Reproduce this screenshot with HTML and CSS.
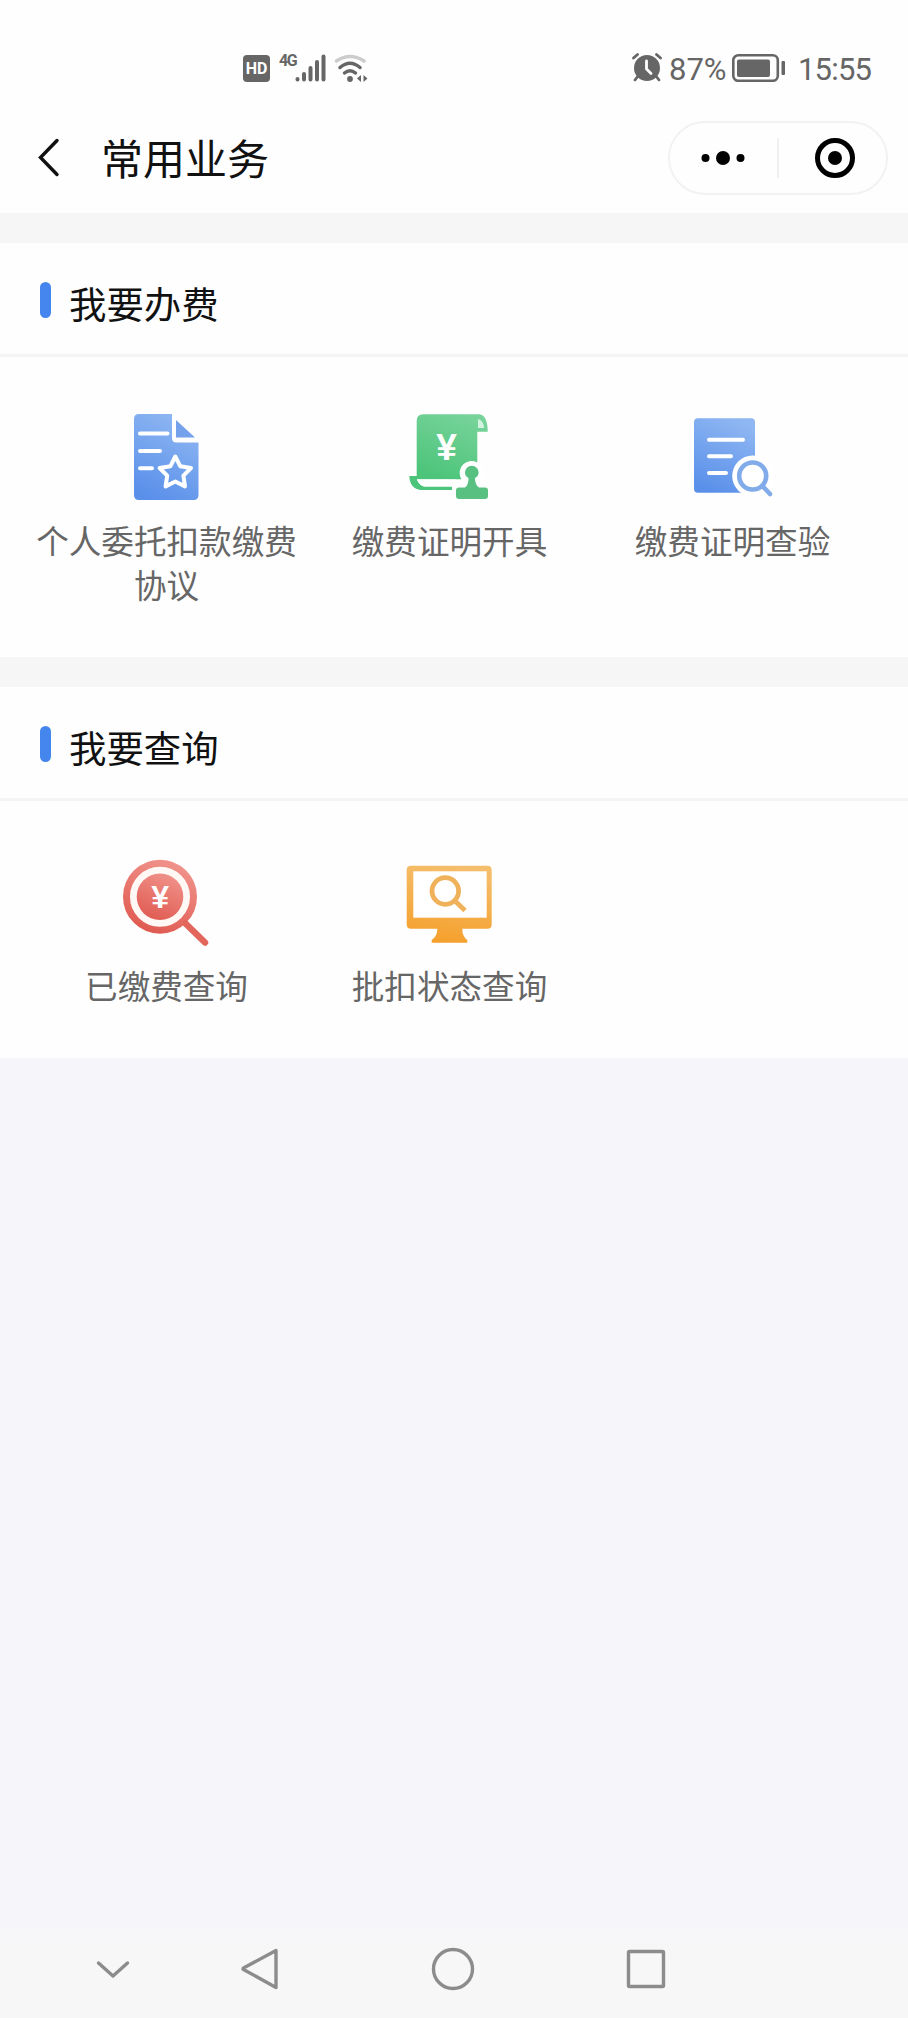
FILE: index.html
```html
<!DOCTYPE html>
<html lang="zh-CN">
<head>
    <meta charset="UTF-8">
    <meta name="viewport" content="width=device-width, initial-scale=1.0">
    <title>常用业务</title>
    <link rel="stylesheet" href="styles.css">
</head>
<body>
    <div class="status-bar">
        <div class="status-left">
            <span class="hd">HD</span>
            <span class="network">4G</span>
            <svg class="signal" width="31" height="28" viewBox="0 0 31 28">
                <g stroke="#666" stroke-width="4" stroke-linecap="round">
                    <path d="M2.500 25v0.500M9 20v5.500M15.500 14v11.500M22 8v17.500M28.500 2.500v23"/>
                </g>
            </svg>
            <svg class="wifi" width="34" height="28" viewBox="0 0 34 28">
                <g fill="none" stroke-width="3.500" stroke-linecap="round">
                    <path stroke="#ccc" d="M2.500 7Q16 -2 30 7"/>
                    <path stroke="#666" d="M6 13.500Q16 5 26 13.500M10.500 19Q16 14.500 21.500 19"/>
                </g>
                <circle cx="16" cy="25" r="2.900" fill="#666"/>
                <path fill="#666" d="M27 21v7l-4-3.500zM29.500 21v7l4-3.500z"/>
            </svg>
        </div>
        <div class="status-right">
            <svg class="alarm" width="32" height="30" viewBox="0 0 32 30">
                <circle cx="16" cy="15" r="13" fill="#666"/>
                <g fill="none" stroke="#666" stroke-width="2.800" stroke-linecap="round">
                    <path d="M2.500 5l4-3.500M29.500 5l-4-3.500M7 23l-3 4M25 23l3 4"/>
                    <path stroke="#fff" d="M15.500 8v8l4.500 4.500"/>
                </g>
            </svg>
            <span class="percent">87%</span>
            <svg class="battery" width="54" height="28" viewBox="0 0 54 28">
                <rect x="1.300" y="1.300" width="44.500" height="25.500" rx="5" fill="none" stroke="#666" stroke-width="2.600"/>
                <rect x="5" y="5.500" width="33" height="17.500" rx="2" fill="#666"/>
                <rect x="49.500" y="7" width="3.500" height="14" rx="1" fill="#666"/>
            </svg>
            <span class="time">15:55</span>
        </div>
    </div>

    <header class="header">
        <svg class="back" width="24" height="42" viewBox="0 0 24 42">
            <path d="M20 3.500L3.500 20.500L20 37.500" fill="none" stroke="#111" stroke-width="3.400" stroke-linecap="round"/>
        </svg>
        <h1>常用业务</h1>
        <div class="capsule">
            <svg class="more" width="46" height="16" viewBox="0 0 46 16">
                <circle cx="5.500" cy="8" r="4"/>
                <circle cx="23" cy="8" r="7"/>
                <circle cx="40.500" cy="8" r="4"/>
            </svg>
            <span class="divider"></span>
            <svg class="close" width="42" height="42" viewBox="0 0 42 42">
                <circle cx="21" cy="21" r="17.500" fill="none" stroke="#000" stroke-width="5"/>
                <circle cx="21" cy="21" r="7"/>
            </svg>
        </div>
    </header>

    <section class="card">
        <h2><span class="mark"></span>我要办费</h2>
        <div class="grid">
            <div class="item">
                <svg width="90" height="90" viewBox="0 0 90 90">
                    <defs>
                        <linearGradient id="blue" x1="0.700" y1="0" x2="0.300" y2="1">
                            <stop offset="0" stop-color="#8fb7f2"/>
                            <stop offset="1" stop-color="#5a90ea"/>
                        </linearGradient>
                    </defs>
                    <path fill="url(#blue)" d="M18 2H51V26Q51 30.500 55.500 30.500H77.500V83Q77.500 88 72.500 88H18Q13 88 13 83V7Q13 2 18 2Z"/>
                    <path fill="#75a1ec" d="M55 8V25.500H74Z"/>
                    <g fill="none" stroke="#fff" stroke-width="4" stroke-linecap="round" stroke-linejoin="round">
                        <path d="M19 21.500H46.500M19 39H39M19 56.300H31"/>
                        <path d="M54.300 44.500L59.300 54.300L70 56L62.400 63.600L64 74.400L54.300 69.500L44.600 74.400L46.200 63.600L38.600 56L49.300 54.300Z"/>
                    </g>
                </svg>
                <p>个人委托扣款缴费协议</p>
            </div>
            <div class="item">
                <svg width="90" height="90" viewBox="0 0 90 90">
                    <defs>
                        <linearGradient id="green" x1="0.700" y1="0" x2="0.300" y2="1">
                            <stop offset="0" stop-color="#77d39a"/>
                            <stop offset="1" stop-color="#4cc47a"/>
                        </linearGradient>
                    </defs>
                    <path fill="url(#green)" d="M19 2.300H75Q83.700 3 83.700 19.700H73.300V67.300H12.700V9Q12.700 2.300 19 2.300Z"/>
                    <path fill="#d4f3df" d="M74 7Q80 9 80 16H74Z"/>
                    <path fill="#4cc47a" d="M5.300 64H13V67.500Q15 73 20 74.500H48V78H17Q6 77 5.300 64Z"/>
                    <path fill="#fff" d="M13 67.500H52V74.500H20Q15 73 13 67.500Z"/>
                    <circle cx="67.700" cy="61" r="12" fill="#fff"/>
                    <path fill="#fff" d="M61 67H79V76H50Z"/>
                    <path fill="#58c181" d="M64.500 66Q61 64 61 60.500A6.800 6.800 0 0 1 74.600 60.500Q74.600 64 71 66Q71 73 75 75.500H81Q84 75.500 84 78.500V84Q84 87 81 87H55Q52 87 52 84V78.500Q52 75.500 55 75.500H61Q64.500 73 64.500 66Z"/>
                    <text class="yen yen-lg" x="42.500" y="48">¥</text>
                </svg>
                <p>缴费证明开具</p>
            </div>
            <div class="item">
                <svg width="90" height="90" viewBox="0 0 90 90">
                    <rect x="7" y="6.300" width="61" height="74.400" rx="4" fill="url(#blue)"/>
                    <path d="M22 27.700H56M22 44.300H44M22 61H39" stroke="#fff" stroke-width="4" stroke-linecap="round"/>
                    <circle cx="65.700" cy="64" r="20.500" fill="#fff"/>
                    <g fill="none" stroke="#82abea" stroke-width="4.600" stroke-linecap="round">
                        <circle cx="65.700" cy="64" r="13.500"/>
                        <path d="M75.500 74L83 82"/>
                    </g>
                </svg>
                <p>缴费证明查验</p>
            </div>
        </div>
    </section>

    <section class="card card-query">
        <h2><span class="mark"></span>我要查询</h2>
        <div class="grid">
            <div class="item">
                <svg width="90" height="90" viewBox="0 0 90 90">
                    <defs>
                        <linearGradient id="red" x1="0.700" y1="0" x2="0.300" y2="1">
                            <stop offset="0" stop-color="#f0928a"/>
                            <stop offset="1" stop-color="#e05b52"/>
                        </linearGradient>
                    </defs>
                    <circle cx="39" cy="39.700" r="33.500" fill="#fff8f4" stroke="url(#red)" stroke-width="7"/>
                    <circle cx="39" cy="39.700" r="23.300" fill="url(#red)"/>
                    <path d="M64.500 66.500L84 85.500" stroke="#e2665c" stroke-width="6.500" stroke-linecap="round"/>
                    <text class="yen" x="39.200" y="51">¥</text>
                </svg>
                <p>已缴费查询</p>
            </div>
            <div class="item">
                <svg width="90" height="90" viewBox="0 0 90 90">
                    <defs>
                        <linearGradient id="orange" x1="0.600" y1="0" x2="0.400" y2="1">
                            <stop offset="0" stop-color="#f5be6c"/>
                            <stop offset="1" stop-color="#f5a02c"/>
                        </linearGradient>
                    </defs>
                    <path fill="url(#orange)" d="M7 8.700H83.500Q87.700 8.700 87.700 13V67.500Q87.700 71.700 83.500 71.700H58.300Q58 79 63.300 83V85.700H27.700V83Q33.500 79 33.300 71.700H7Q2.700 71.700 2.700 67.500V13Q2.700 8.700 7 8.700Z"/>
                    <rect x="9.300" y="14.300" width="73.400" height="46.400" fill="#fff"/>
                    <g fill="none" stroke="#efb25a" stroke-width="4.800">
                        <circle cx="41.300" cy="34" r="13.300"/>
                        <path d="M50.500 43.500L61 53.500"/>
                    </g>
                </svg>
                <p>批扣状态查询</p>
            </div>
        </div>
    </section>

    <nav class="nav-bar">
        <svg width="46" height="46" viewBox="0 0 46 46">
            <path d="M8.500 17L23 30L37.500 17"/>
        </svg>
        <svg width="46" height="46" viewBox="0 0 46 46">
            <path d="M39 4.500V41.500L6.500 23.500Q5.500 23 6.500 22Z"/>
        </svg>
        <svg width="46" height="46" viewBox="0 0 46 46">
            <circle cx="23" cy="23" r="19.500"/>
        </svg>
        <svg width="46" height="46" viewBox="0 0 46 46">
            <rect x="5.500" y="5.500" width="35" height="35" rx="1"/>
        </svg>
    </nav>
</body>
</html>
```
FILE: styles.css
```css
* {
    box-sizing: border-box;
}

body {
    margin: 0;
    height: 2018px;
    display: flex;
    flex-direction: column;
    font-family: "Noto Sans CJK SC", sans-serif;
    background-color: #f6f6fa;
}

h1, h2, p {
    margin: 0;
    font-weight: 400;
}

svg {
    display: block;
    flex: none;
}

.status-bar {
    height: 110px;
    padding: 26px 36px 0 243px;
    display: flex;
    justify-content: space-between;
    align-items: center;
    background-color: #fefefe;
    color: #666;
    font-family: Roboto, sans-serif;
}

.status-left, .status-right {
    display: flex;
    align-items: center;
}

.hd {
    width: 27px;
    height: 27px;
    border-radius: 4px;
    background-color: #666;
    color: #fff;
    font-size: 16px;
    font-weight: 700;
    line-height: 28px;
    text-align: center;
}

.network {
    height: 28px;
    margin-left: 9px;
    font-size: 16px;
    font-weight: 700;
    line-height: 14px;
    letter-spacing: -1.5px;
}

.signal {
    margin-left: -1px;
}

.wifi {
    margin-left: 8px;
}

.percent {
    margin-left: 6px;
    font-size: 31px;
    line-height: 36px;
    padding-top: 4px;
    width: 63px;
}

.time {
    width: 74px;
    margin-left: 12px;
    padding-top: 4px;
    font-size: 31px;
    line-height: 36px;
    letter-spacing: -0.8px;
    white-space: nowrap;
}

.header {
    height: 103px;
    padding: 0 20px 7px 37px;
    display: flex;
    align-items: center;
    background-color: #fefefe;
}

.header h1 {
    margin: -2px 0 0 40px;
    font-size: 42px;
    line-height: 60px;
    color: #111;
}

.capsule {
    width: 220px;
    height: 74px;
    margin-left: auto;
    padding: 0 30px 0 30px;
    border: 2px solid #f2f2f2;
    border-radius: 37px;
    display: flex;
    align-items: center;
    justify-content: space-between;
}

.divider {
    width: 2px;
    height: 40px;
    margin-left: -4px;
    background-color: #f0f0f0;
}

.card {
    height: 414px;
    margin-top: 30px;
    background-color: #fefefe;
    box-shadow: 0 -30px 0 #f6f6f6;
}

.card-query {
    height: 371px;
}

.card h2 {
    height: 114px;
    padding: 9px 0 0 40px;
    border-bottom: 3px solid #f4f4f4;
    display: flex;
    align-items: center;
    font-size: 37.4px;
    line-height: 54px;
    color: #111;
}

.mark {
    width: 11px;
    height: 36px;
    margin: -6px 18px 0 0;
    border-radius: 6px;
    background-color: #4486ee;
}

.grid {
    padding: 55px 25px 0;
    display: grid;
    grid-template-columns: repeat(3, 283px);
}

.card-query .grid {
    padding-top: 56px;
}

.item {
    display: flex;
    flex-direction: column;
    align-items: center;
}

.item svg {
    margin-right: 2px;
}

.item p {
    margin-top: 16px;
    font-size: 32.6px;
    line-height: 44px;
    text-align: center;
    color: #666;
}

.yen {
    font-family: "Liberation Sans", sans-serif;
    font-size: 32px;
    font-weight: 700;
    text-anchor: middle;
    fill: #fff;
}

.yen-lg {
    font-size: 37px;
}

.nav-bar {
    height: 93px;
    margin-top: auto;
    padding: 0 240px 6px 90px;
    display: flex;
    align-items: center;
    background-image: linear-gradient(#f6f6fa, #f7f7f7 30%);
}

.nav-bar svg {
    margin-right: 147px;
    fill: none;
    stroke: #8c8c8c;
    stroke-width: 3.4;
    stroke-linecap: round;
    stroke-linejoin: round;
}

.nav-bar svg:first-child {
    margin-right: 101px;
}
```
